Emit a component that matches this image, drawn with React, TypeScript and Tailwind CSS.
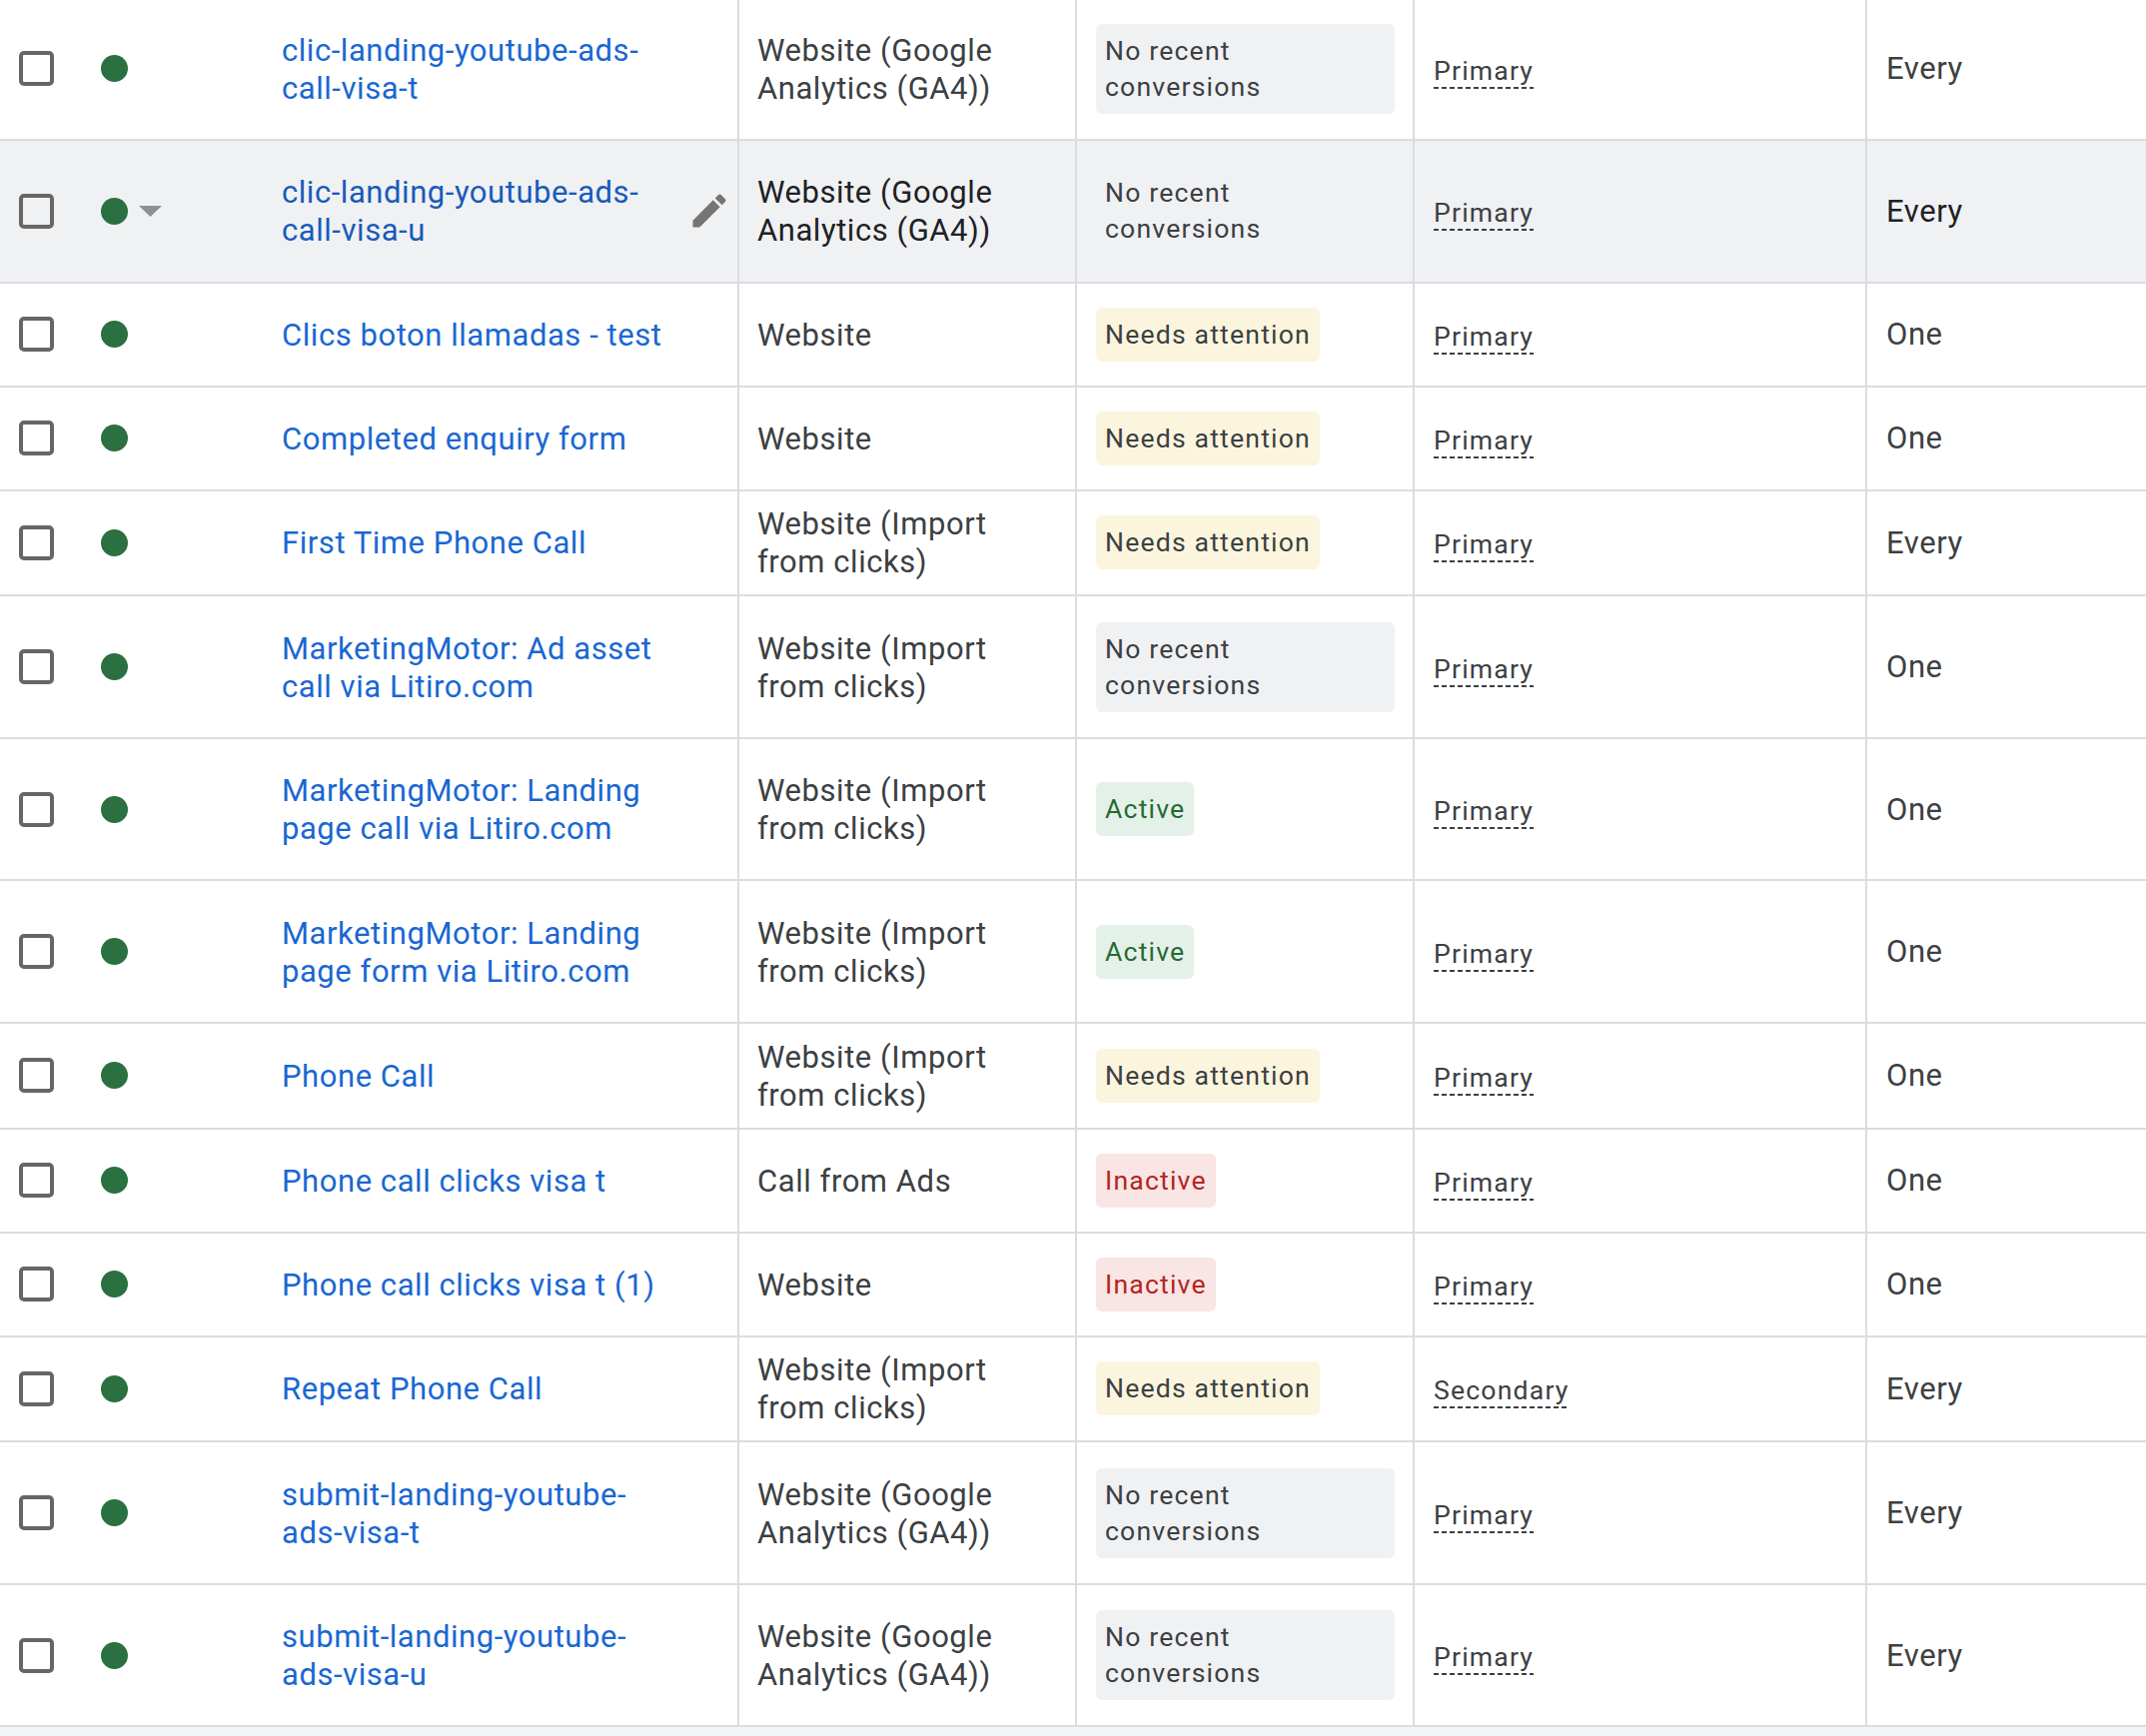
import React from "react";

type Status = "none" | "attention" | "active" | "inactive";

type Row = {
  name: string;
  source: string;
  status: Status;
  goal: string;
  count: string;
  size: "tall" | "mid" | "short";
  hovered?: boolean;
};

const rows: Row[] = [
  { name: "clic-landing-youtube-ads-call-visa-t", source: "Website (Google Analytics (GA4))", status: "none", goal: "Primary", count: "Every", size: "tall" },
  { name: "clic-landing-youtube-ads-call-visa-u", source: "Website (Google Analytics (GA4))", status: "none", goal: "Primary", count: "Every", size: "tall", hovered: true },
  { name: "Clics boton llamadas - test", source: "Website", status: "attention", goal: "Primary", count: "One", size: "short" },
  { name: "Completed enquiry form", source: "Website", status: "attention", goal: "Primary", count: "One", size: "short" },
  { name: "First Time Phone Call", source: "Website (Import from clicks)", status: "attention", goal: "Primary", count: "Every", size: "mid" },
  { name: "MarketingMotor: Ad asset call via Litiro.com", source: "Website (Import from clicks)", status: "none", goal: "Primary", count: "One", size: "tall" },
  { name: "MarketingMotor: Landing page call via Litiro.com", source: "Website (Import from clicks)", status: "active", goal: "Primary", count: "One", size: "tall" },
  { name: "MarketingMotor: Landing page form via Litiro.com", source: "Website (Import from clicks)", status: "active", goal: "Primary", count: "One", size: "tall" },
  { name: "Phone Call", source: "Website (Import from clicks)", status: "attention", goal: "Primary", count: "One", size: "mid" },
  { name: "Phone call clicks visa t", source: "Call from Ads", status: "inactive", goal: "Primary", count: "One", size: "short" },
  { name: "Phone call clicks visa t (1)", source: "Website", status: "inactive", goal: "Primary", count: "One", size: "short" },
  { name: "Repeat Phone Call", source: "Website (Import from clicks)", status: "attention", goal: "Secondary", count: "Every", size: "mid" },
  { name: "submit-landing-youtube-ads-visa-t", source: "Website (Google Analytics (GA4))", status: "none", goal: "Primary", count: "Every", size: "tall" },
  { name: "submit-landing-youtube-ads-visa-u", source: "Website (Google Analytics (GA4))", status: "none", goal: "Primary", count: "Every", size: "tall" },
];

const sizeClass = {
  tall: "h-[142.5px]",
  mid: "h-[105.8px]",
  short: "h-[104px]",
};

const StatusChip = ({ status, hovered }: { status: Status; hovered?: boolean }) => {
  if (status === "none") {
    return (
      <div className={`w-[299px] rounded-[6px] px-[9px] py-[9px] text-[#3c4043] ${hovered ? "" : "bg-[#f0f1f3]"}`}>
        No recent<br />conversions
      </div>
    );
  }
  if (status === "attention") {
    return <div className="rounded-[6px] bg-[#fcf5de] px-[9px] py-[9px] text-[#3c4043]">Needs attention</div>;
  }
  if (status === "active") {
    return <div className="rounded-[6px] bg-[#e4f1e8] px-[9px] py-[9px] text-[#256a35]">Active</div>;
  }
  return <div className="rounded-[6px] bg-[#fae5e5] px-[9px] py-[9px] text-[#b3261e]">Inactive</div>;
};

const PencilIcon = () => (
  <svg viewBox="0 0 24 24" className="h-[44px] w-[44px] fill-[#757575]">
    <path d="M3 17.25V21h3.75L17.81 9.94l-3.75-3.75L3 17.25zM20.71 7.04c.39-.39.39-1.02 0-1.41l-2.34-2.34c-.39-.39-1.02-.39-1.41 0l-1.83 1.83 3.75 3.75 1.83-1.83z" />
  </svg>
);

const TableRow = ({ row }: { row: Row }) => {
  const textColor = row.hovered ? "text-[#202124]" : "text-[#3c4043]";
  return (
    <div
      className={`grid grid-cols-[738px_338px_338px_453px_1fr] border-b-2 border-[#dadce0] ${sizeClass[row.size]} ${
        row.hovered ? "bg-[#f0f1f3]" : "bg-white"
      }`}
    >
      <div className="flex items-center">
        <div className="w-[101px] pl-[19px]">
          <div className="h-[35px] w-[35px] rounded-[5px] border-[4px] border-[#666666]" />
        </div>
        <div className="flex w-[181px] items-center">
          <div className="h-[27px] w-[27px] rounded-full bg-[#2b7040]" />
          {row.hovered && (
            <svg viewBox="0 0 23 11" className="ml-[11px] h-[11px] w-[23px] fill-[#8f9093]">
              <polygon points="0,0 23,0 11.5,11" />
            </svg>
          )}
        </div>
        <div className={`w-[388px] pt-[2px] text-[31px] leading-[38px] tracking-[0.55px] ${row.hovered ? "text-[#185abc]" : "text-[#1967d2]"}`}>
          {row.name}
        </div>
        {row.hovered && (
          <div className="ml-[18px]">
            <PencilIcon />
          </div>
        )}
      </div>
      <div className={`flex items-center border-l-2 border-[#dadce0] pl-[18px] pr-[30px] pt-[2px] text-[31px] leading-[38px] tracking-[0.55px] ${textColor}`}>
        {row.source}
      </div>
      <div className="flex items-center border-l-2 border-[#dadce0] pl-[19px] text-[26.6px] leading-[36px] tracking-[1.18px]">
        <StatusChip status={row.status} hovered={row.hovered} />
      </div>
      <div className="flex items-center border-l-2 border-[#dadce0] pl-[19px] pt-[6px]">
        <span className="bg-[repeating-linear-gradient(to_right,#3c4043_0,#3c4043_5px,transparent_5px,transparent_8px)] bg-[length:100%_2px] bg-bottom bg-no-repeat pb-[2px] text-[26.6px] leading-[32px] tracking-[1.18px] text-[#3c4043]">
          {row.goal}
        </span>
      </div>
      <div className={`flex items-center border-l-2 border-[#dadce0] pl-[19px] pt-[1px] text-[31px] leading-[38px] tracking-[0.55px] ${textColor}`}>
        {row.count}
      </div>
    </div>
  );
};

export default function App() {
  return (
    <div className="h-screen overflow-hidden bg-[#f1f3f4] [font-family:Roboto,sans-serif]">
      <div className="-mt-[1.5px]">
        {rows.map((row) => (
          <TableRow key={row.name} row={row} />
        ))}
      </div>
    </div>
  );
}
